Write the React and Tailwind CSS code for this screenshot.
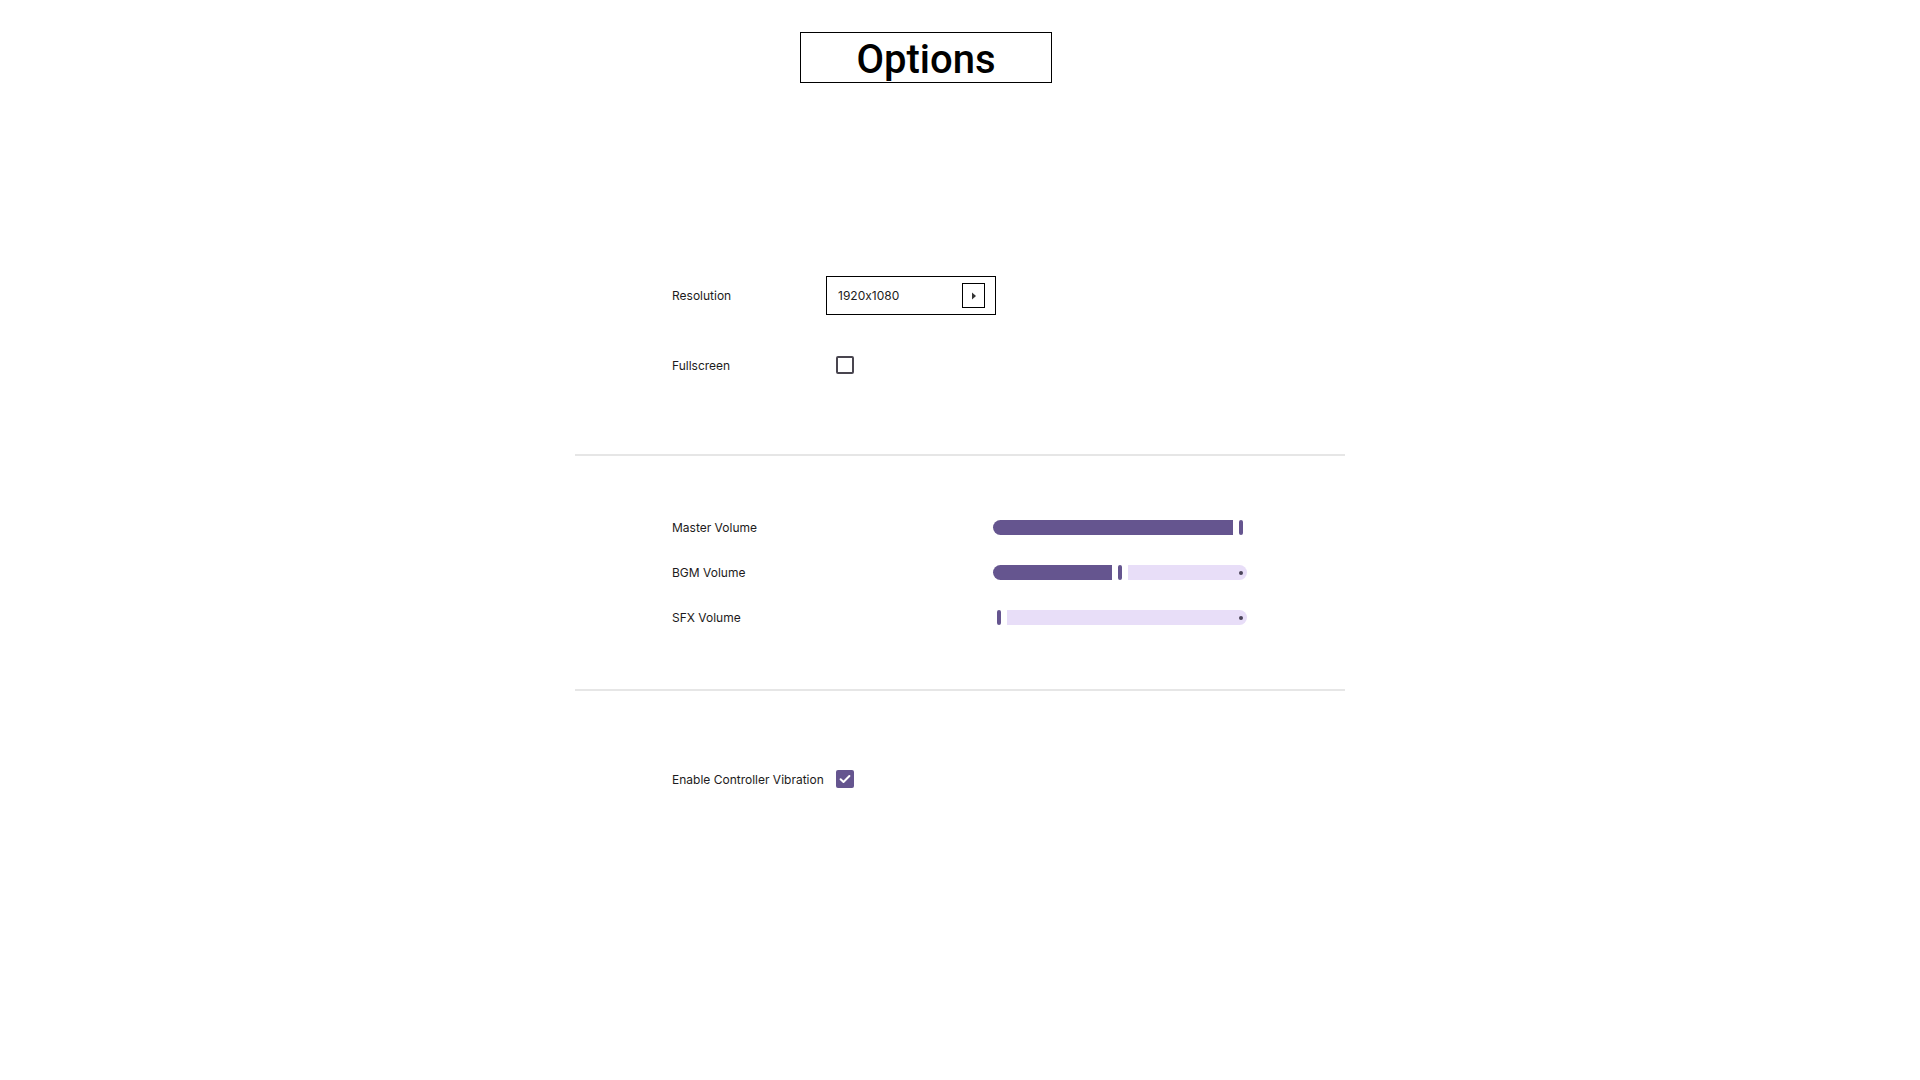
import { useState } from 'react'

const SLIDER_W = 254

function Slider({ value }) {
  // thumb centre runs from 6px to 248px across the track
  const c = 6 + 242 * value
  const active = c - 8
  const inactive = SLIDER_W - c - 8
  return (
    <div className="flex items-center h-[15px]" style={{ width: SLIDER_W }}>
      {active > 0 ? (
        <div className="h-full bg-[#65558f] rounded-l-full rounded-r-[2px] mr-[6px]" style={{ width: active }} />
      ) : (
        <div style={{ width: c - 2 }} />
      )}
      <div className="h-full w-[4px] rounded-full bg-[#65558f]" />
      {inactive > 0 && (
        <div
          className="h-full ml-[6px] bg-[#e8def8] rounded-r-full rounded-l-[2px] flex items-center justify-end pr-[4px]"
          style={{ width: inactive }}
        >
          <div className="w-[4px] h-[4px] rounded-full bg-[#4a4459]" />
        </div>
      )}
    </div>
  )
}

function Checkbox({ checked, onChange }) {
  return (
    <button
      onClick={() => onChange(!checked)}
      className={`ml-[10px] w-[18px] h-[18px] rounded-[2px] flex items-center justify-center ${
        checked ? 'bg-[#65558f]' : 'border-2 border-[#49454f]'
      }`}
    >
      {checked && (
        <svg width="14" height="14" viewBox="0 0 14 14" fill="none">
          <path d="M2.6 7.2l2.9 2.8L11.4 4" stroke="white" strokeWidth="2" strokeLinecap="round" strokeLinejoin="round" />
        </svg>
      )}
    </button>
  )
}

function Label({ children, w = 'w-[154px]' }) {
  return <span className={`${w} shrink-0 text-[12px] leading-[15px] text-[#1d1b20]`}>{children}</span>
}

export default function App() {
  const [fullscreen, setFullscreen] = useState(false)
  const [vibration, setVibration] = useState(true)

  return (
    <div
      className="min-h-screen bg-white"
      style={{ fontFamily: 'Inter, "Noto Sans", sans-serif', fontFeatureSettings: '"calt" 0' }}
    >
      <div className="w-[770px] mx-auto flex flex-col">
        <div className="mt-[32px] ml-[225px] w-[252px] h-[51px] border border-black flex items-center justify-center">
          <h1 className="text-[40px] font-medium text-black leading-none mt-[5px]" style={{ fontFamily: 'Roboto, sans-serif' }}>
            Options
          </h1>
        </div>

        <div className="mt-[193px] pl-[97px] flex flex-col">
          <div className="flex items-center h-[39px]">
            <Label>Resolution</Label>
            <div className="w-[170px] h-[39px] border border-black flex items-center justify-between pl-[11px] pr-[10px]">
              <span className="text-[12px] text-[#1d1b20]">1920x1080</span>
              <button className="w-[23px] h-[25px] border border-black flex items-center justify-center">
                <svg width="6" height="8" viewBox="0 0 6 8">
                  <path d="M1 0.5L5 4L1 7.5Z" fill="#333" />
                </svg>
              </button>
            </div>
          </div>
          <div className="flex items-center h-[18px] mt-[41px]">
            <Label>Fullscreen</Label>
            <Checkbox checked={fullscreen} onChange={setFullscreen} />
          </div>
        </div>

        <div className="mt-[80px] h-[2px] bg-[#e6e6e6]" />

        <div className="mt-[64px] pl-[97px] flex flex-col gap-[30px]">
          <div className="flex items-center h-[15px]">
            <Label w="w-[321px]">Master Volume</Label>
            <Slider value={1} />
          </div>
          <div className="flex items-center h-[15px]">
            <Label w="w-[321px]">BGM Volume</Label>
            <Slider value={0.5} />
          </div>
          <div className="flex items-center h-[15px]">
            <Label w="w-[321px]">SFX Volume</Label>
            <Slider value={0} />
          </div>
        </div>

        <div className="mt-[64px] h-[2px] bg-[#e6e6e6]" />

        <div className="mt-[79px] pl-[97px] flex items-center h-[18px]">
          <Label>Enable Controller Vibration</Label>
          <Checkbox checked={vibration} onChange={setVibration} />
        </div>
      </div>
    </div>
  )
}
